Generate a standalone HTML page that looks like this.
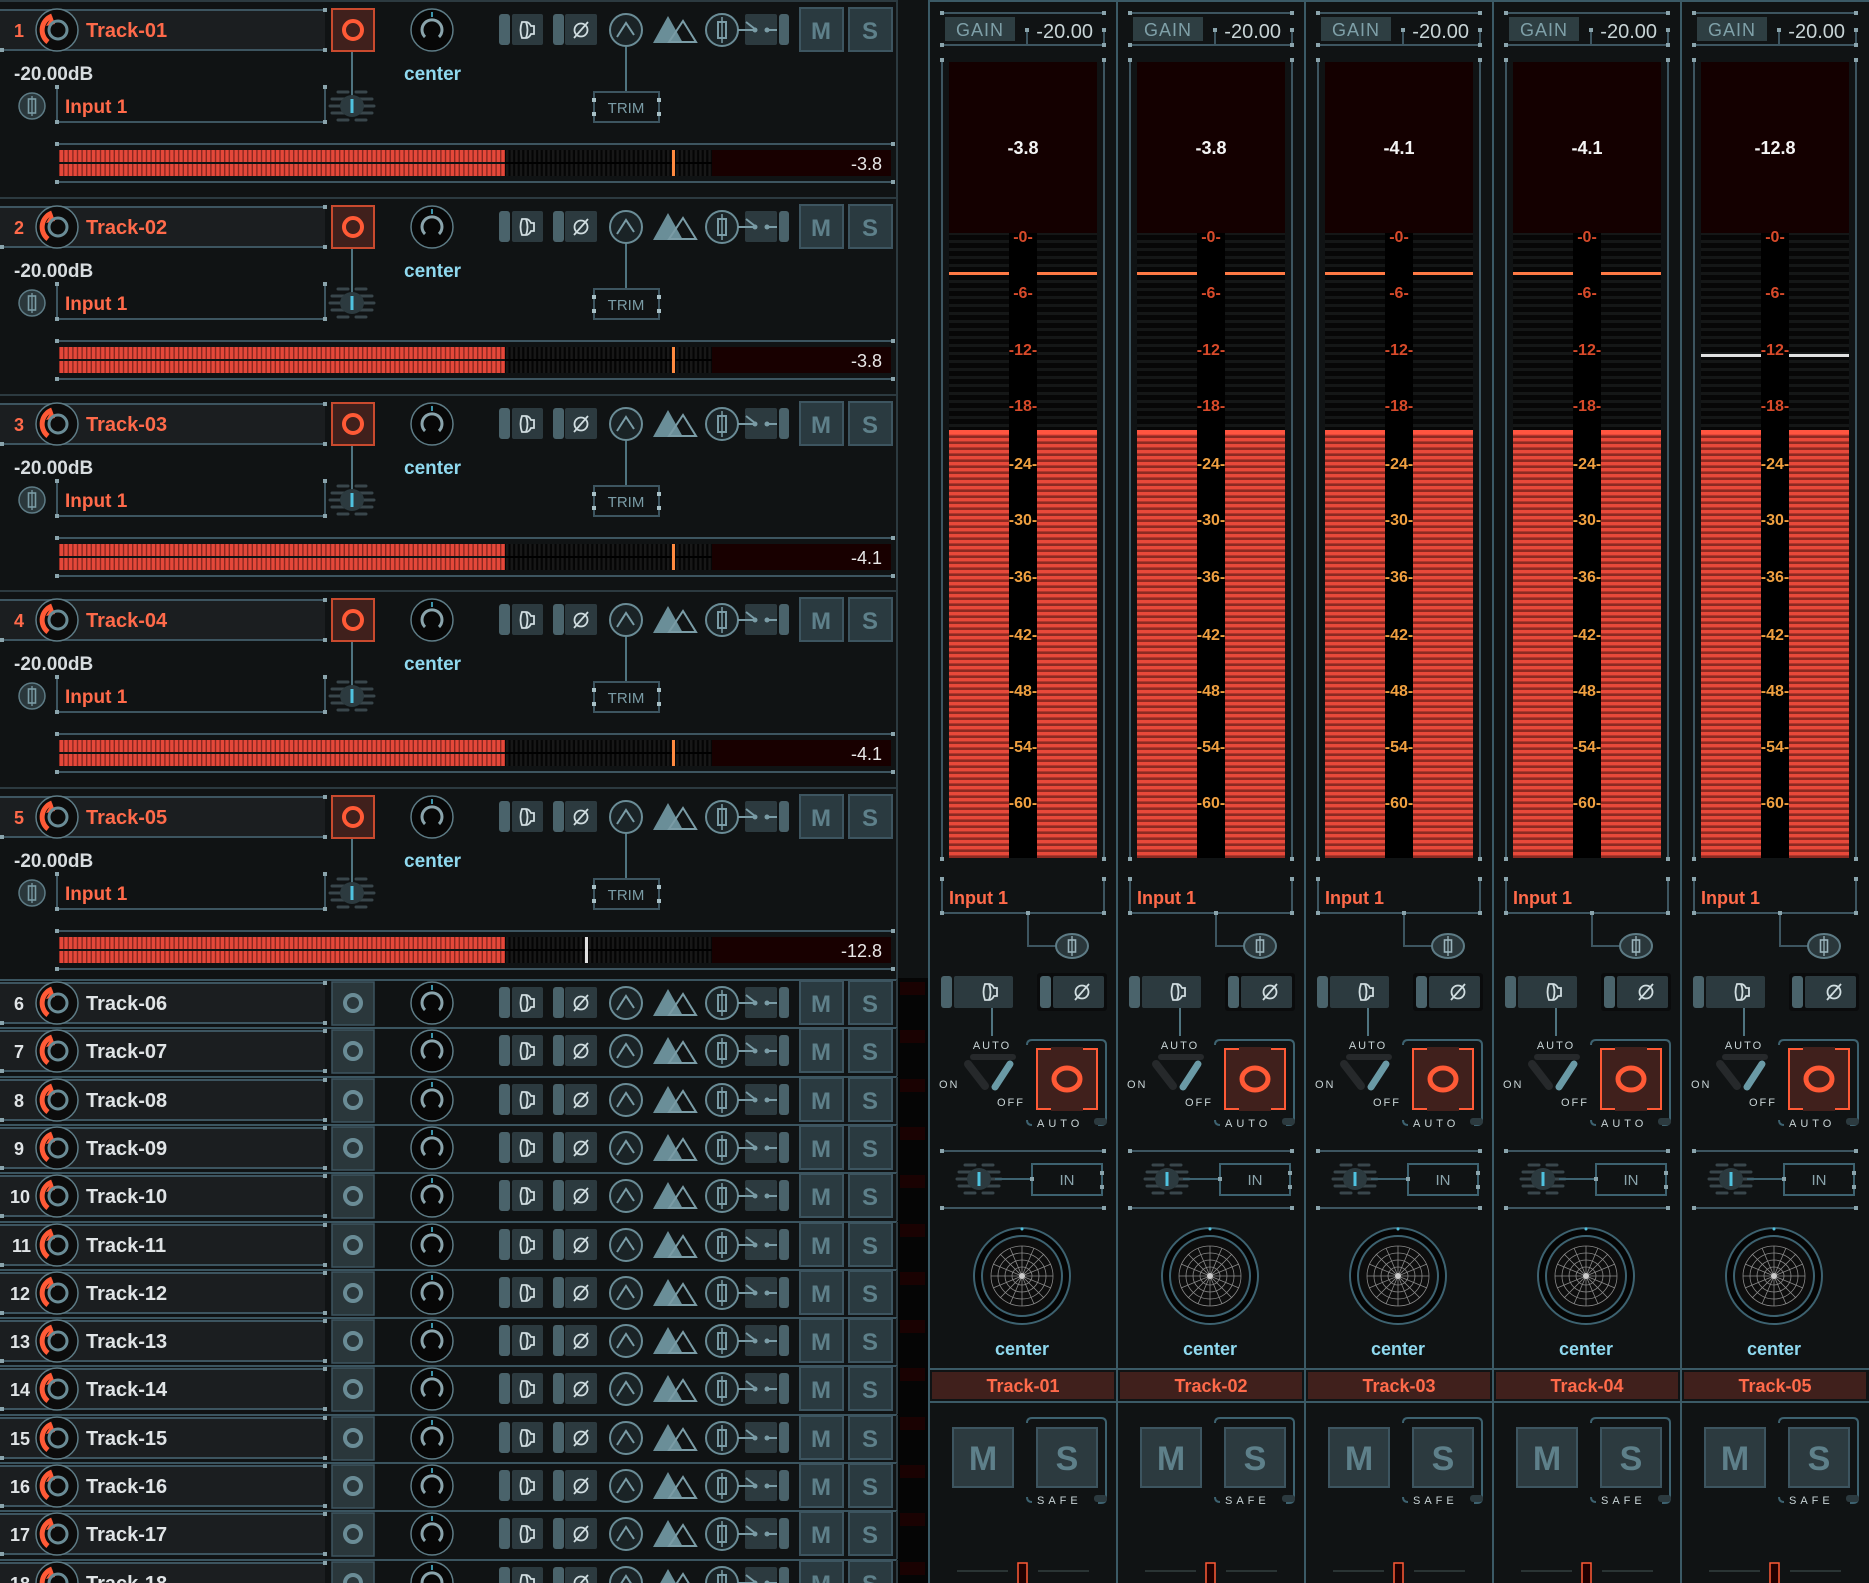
<!DOCTYPE html>
<html><head><meta charset="utf-8"><style>
html,body{margin:0;padding:0;background:#101314;}
svg{display:block;font-family:"Liberation Sans",sans-serif;}
.b{font-weight:bold}
</style></head><body>
<svg width="1869" height="1583" viewBox="0 0 1869 1583" xmlns="http://www.w3.org/2000/svg">
<defs>
<pattern id="rh" patternUnits="userSpaceOnUse" width="4.6" height="10"><rect width="4.6" height="10" fill="#8a2820"/><rect width="3.2" height="10" fill="#e5483a"/></pattern>
<pattern id="dh" patternUnits="userSpaceOnUse" width="4.6" height="10"><rect width="4.6" height="10" fill="#050505"/><rect width="2.4" height="10" fill="#181818"/></pattern>
<pattern id="rv" patternUnits="userSpaceOnUse" width="10" height="6"><rect width="10" height="6" fill="#8c2a22"/><rect width="10" height="3.4" fill="#e8493a"/></pattern>
<pattern id="dv" patternUnits="userSpaceOnUse" width="10" height="8"><rect width="10" height="8" fill="#070707"/><rect width="10" height="3" fill="#151717"/></pattern>

<symbol id="ic" overflow="visible">
  <circle cx="57" cy="0" r="21" fill="#0c0c0c" stroke="#5d7b85" stroke-width="1.5"/>
  <path d="M48,12 A15,15 0 0 1 52,-14" stroke="#ff5a36" stroke-width="5" fill="none"/>
  <path d="M46,-4 l6,-10 l3,8 z" fill="#ff5a36"/>
  <circle cx="58" cy="0" r="9" stroke="#6a8c96" stroke-width="3" fill="none"/>
  <circle cx="432" cy="0" r="21" fill="#070707" stroke="#5d7b85" stroke-width="1.5"/>
  <path d="M425,7 A10,10 0 1 1 439,7" stroke="#8aa4ac" stroke-width="3" fill="none"/>
  <line x1="432" y1="-18" x2="432" y2="-13" stroke="#4fc3e0" stroke-width="1.5"/>
  <rect x="499" y="-16" width="11" height="31" rx="3" fill="#4a636b"/>
  <rect x="512" y="-16" width="31" height="31" rx="2" fill="#2c3a3f"/>
  <path d="M522,-8 h4 q3,0 5,4 h3 v8 h-3 q-2,4 -5,4 h-4 q-3,-8 0,-16 z M526,-8 q3,8 0,16" stroke="#d0dde0" stroke-width="1.8" fill="none"/>
  <rect x="553" y="-16" width="11" height="31" rx="3" fill="#4a636b"/>
  <rect x="565" y="-16" width="32" height="31" rx="2" fill="#2c3a3f"/>
  <circle cx="581" cy="0" r="6.5" stroke="#d0dde0" stroke-width="1.8" fill="none"/>
  <line x1="574" y1="8" x2="588" y2="-8" stroke="#d0dde0" stroke-width="1.8"/>
  <circle cx="626" cy="0" r="16" stroke="#6a8c96" stroke-width="2" fill="#1a2326"/>
  <polyline points="617,7 626,-7 634,5" stroke="#7a9ca6" stroke-width="2" fill="none"/>
  <polygon points="653,13 668,-14 683,13" fill="#6a8e98"/>
  <polygon points="669,12 683,-9 696,12" stroke="#7a9ca6" stroke-width="2" fill="none"/>
  <circle cx="722" cy="0" r="16" stroke="#6a8c96" stroke-width="2" fill="#1a2326"/>
  <rect x="718" y="-8" width="8" height="16" stroke="#7a9ca6" stroke-width="2" fill="none"/>
  <line x1="722" y1="-13" x2="722" y2="13" stroke="#7a9ca6" stroke-width="1.5"/>
  <rect x="745" y="-16" width="32" height="31" rx="2" fill="#2c3a3f"/>
  <line x1="738" y1="0" x2="756" y2="0" stroke="#7a9ca6" stroke-width="2"/>
  <circle cx="755" cy="0" r="2.5" fill="#7a9ca6"/><circle cx="767" cy="0" r="2.5" fill="#7a9ca6"/>
  <line x1="755" y1="-1" x2="746" y2="-8" stroke="#7a9ca6" stroke-width="2"/>
  <line x1="767" y1="0" x2="777" y2="0" stroke="#7a9ca6" stroke-width="2"/>
  <rect x="779" y="-16" width="10" height="31" rx="3" fill="#4a636b"/>
  <rect x="800" y="-22" width="43" height="43" fill="#2a3a40" stroke="#3d5560" stroke-width="2"/>
  <rect x="849" y="-22" width="43" height="43" fill="#2a3a40" stroke="#3d5560" stroke-width="2"/>
</symbol>

<symbol id="fd" overflow="visible">
  <g stroke="#39464b" stroke-width="3" stroke-linecap="round">
  <line x1="-14" y1="-14" x2="-4" y2="-14"/><line x1="4" y1="-14" x2="14" y2="-14"/>
  <line x1="-20" y1="-7" x2="20" y2="-7"/><line x1="-22" y1="0" x2="22" y2="0"/><line x1="-20" y1="7" x2="20" y2="7"/>
  <line x1="-14" y1="14" x2="-4" y2="14"/><line x1="4" y1="14" x2="14" y2="14"/></g>
  <ellipse cx="0" cy="0" rx="12" ry="11" fill="#2c3a3f"/>
  <line x1="0" y1="-7" x2="0" y2="7" stroke="#4fc3e0" stroke-width="3"/>
</symbol>

<symbol id="bt" overflow="visible">
  <line x1="0" y1="1" x2="897" y2="1" stroke="#2c3a40" stroke-width="2"/>
  <rect x="0" y="10" width="325" height="40" fill="#1b1e20"/>
  <line x1="0" y1="10" x2="325" y2="10" stroke="#3d5560" stroke-width="2"/>
  <line x1="0" y1="50" x2="325" y2="50" stroke="#3d5560" stroke-width="2"/>
  <rect x="323" y="8" width="4" height="4" fill="#8aa4ac"/><rect x="323" y="48" width="4" height="4" fill="#8aa4ac"/>
  <rect x="0" y="48" width="4" height="4" fill="#8aa4ac"/>
  <line x1="352" y1="51" x2="352" y2="100" stroke="#4f7480" stroke-width="2"/>
  <rect x="332" y="9" width="42" height="42" fill="#40201c" stroke="#c94a2e" stroke-width="2"/>
  <circle cx="353" cy="30" r="9" stroke="#ff5a36" stroke-width="4" fill="none"/>
  <use href="#ic" y="30"/>
  <line x1="626" y1="47" x2="626" y2="92" stroke="#4f7480" stroke-width="2"/>
  <circle cx="32" cy="106" r="13" fill="#2a373b" stroke="#5d7b85" stroke-width="1.5"/>
  <rect x="28.5" y="99" width="7" height="14" stroke="#7a9ca6" stroke-width="1.6" fill="none"/>
  <line x1="32" y1="96" x2="32" y2="116" stroke="#7a9ca6" stroke-width="1.3"/>
  <polyline points="57,87 57,122 325,122 325,87" stroke="#3d5560" stroke-width="2" fill="none"/>
  <rect x="55" y="85" width="4" height="4" fill="#8aa4ac"/><rect x="323" y="85" width="4" height="4" fill="#8aa4ac"/>
  <rect x="55" y="120" width="4" height="4" fill="#8aa4ac"/><rect x="323" y="120" width="4" height="4" fill="#8aa4ac"/>
  <use href="#fd" x="352" y="106"/>
  <rect x="594" y="92" width="65" height="30" stroke="#3d5560" stroke-width="2" fill="none"/>
  <rect x="592" y="98" width="4" height="4" fill="#a8c0c6"/><rect x="657" y="98" width="4" height="4" fill="#a8c0c6"/>
  <rect x="592" y="112" width="4" height="4" fill="#a8c0c6"/><rect x="657" y="112" width="4" height="4" fill="#a8c0c6"/>
  <line x1="57" y1="144" x2="893" y2="144" stroke="#3d5560" stroke-width="2"/>
  <line x1="57" y1="182" x2="893" y2="182" stroke="#3d5560" stroke-width="2"/>
  <rect x="55" y="142" width="4" height="4" fill="#8aa4ac"/><rect x="891" y="142" width="4" height="4" fill="#8aa4ac"/>
  <rect x="55" y="180" width="4" height="4" fill="#8aa4ac"/><rect x="891" y="180" width="4" height="4" fill="#8aa4ac"/>
  <rect x="59" y="150" width="446" height="12" fill="url(#rh)"/>
  <rect x="59" y="164" width="446" height="12" fill="url(#rh)"/>
  <rect x="505" y="150" width="207" height="26" fill="url(#dh)"/>
  <rect x="505" y="162" width="207" height="2" fill="#000"/>
  <rect x="712" y="150" width="179" height="26" fill="#180000"/>
  <line x1="897" y1="0" x2="897" y2="197" stroke="#2c3a40" stroke-width="2"/>
</symbol>

<symbol id="sr" overflow="visible">
  <line x1="0" y1="0" x2="897" y2="0" stroke="#3b5560" stroke-width="2"/>
  <rect x="0" y="3" width="325" height="40" fill="#1b1e20"/>
  <line x1="0" y1="3" x2="325" y2="3" stroke="#3d5560" stroke-width="2"/>
  <line x1="0" y1="43" x2="325" y2="43" stroke="#3d5560" stroke-width="2"/>
  <rect x="323" y="1" width="4" height="4" fill="#8aa4ac"/><rect x="0" y="41" width="4" height="4" fill="#8aa4ac"/><rect x="323" y="41" width="4" height="4" fill="#8aa4ac"/>
  <rect x="332" y="2" width="42" height="43" fill="#2a373b" stroke="#3d5560" stroke-width="1.5"/>
  <circle cx="353" cy="23" r="8" stroke="#6a8c96" stroke-width="4" fill="none"/>
  <use href="#ic" y="23"/>
  <line x1="897" y1="0" x2="897" y2="48" stroke="#2c3a40" stroke-width="2"/>
  <rect x="900" y="2" width="25" height="13" fill="#1a0202"/>
</symbol>

<symbol id="st" overflow="visible">
  <line x1="0" y1="0" x2="0" y2="1583" stroke="#3b5a66" stroke-width="2"/>
  <line x1="0" y1="1" x2="188" y2="1" stroke="#3b5a66" stroke-width="2"/>
  <line x1="13" y1="13" x2="175" y2="13" stroke="#3d5560" stroke-width="2"/>
  <line x1="13" y1="45" x2="175" y2="45" stroke="#3d5560" stroke-width="2"/>
  <line x1="98" y1="30" x2="98" y2="45" stroke="#3d5560" stroke-width="2"/>
  <line x1="175" y1="30" x2="175" y2="45" stroke="#3d5560" stroke-width="2"/>
  <rect x="11" y="11" width="4" height="4" fill="#8aa4ac"/><rect x="173" y="11" width="4" height="4" fill="#8aa4ac"/>
  <rect x="11" y="43" width="4" height="4" fill="#8aa4ac"/><rect x="173" y="43" width="4" height="4" fill="#8aa4ac"/>
  <rect x="96" y="28" width="4" height="4" fill="#8aa4ac"/><rect x="173" y="28" width="4" height="4" fill="#8aa4ac"/>
  <rect x="16" y="17" width="70" height="24" fill="#2e3e42"/>
  <line x1="13" y1="60" x2="13" y2="858" stroke="#3d5560" stroke-width="2"/>
  <line x1="175" y1="60" x2="175" y2="858" stroke="#3d5560" stroke-width="2"/>
  <rect x="11" y="58" width="4" height="4" fill="#8aa4ac"/><rect x="173" y="58" width="4" height="4" fill="#8aa4ac"/>
  <rect x="11" y="857" width="4" height="4" fill="#8aa4ac"/><rect x="173" y="857" width="4" height="4" fill="#8aa4ac"/>
  <rect x="20" y="62" width="148" height="171" fill="#140000"/>
  <rect x="20" y="233" width="60" height="197" fill="url(#dv)"/>
  <rect x="108" y="233" width="60" height="197" fill="url(#dv)"/>
  <rect x="80" y="233" width="28" height="625" fill="#000"/>
  <rect x="20" y="430" width="60" height="428" fill="url(#rv)"/>
  <rect x="108" y="430" width="60" height="428" fill="url(#rv)"/>
  <rect x="20" y="430" width="60" height="4" fill="#ff5540"/><rect x="108" y="430" width="60" height="4" fill="#ff5540"/>
  <polyline points="13,879 13,913 175,913 175,879" stroke="#3d5560" stroke-width="2" fill="none"/>
  <rect x="11" y="877" width="4" height="4" fill="#8aa4ac"/><rect x="173" y="877" width="4" height="4" fill="#8aa4ac"/>
  <rect x="11" y="911" width="4" height="4" fill="#8aa4ac"/><rect x="173" y="911" width="4" height="4" fill="#8aa4ac"/>
  <polyline points="99,913 99,946 127,946" stroke="#3d5560" stroke-width="2" fill="none"/>
  <rect x="97" y="911" width="4" height="4" fill="#8aa4ac"/>
  <ellipse cx="143" cy="946" rx="16" ry="12" fill="#2a373b" stroke="#5d7b85" stroke-width="2"/>
  <rect x="139.5" y="940" width="7" height="12" stroke="#9ab4bc" stroke-width="1.6" fill="none"/>
  <line x1="143" y1="936" x2="143" y2="956" stroke="#9ab4bc" stroke-width="1.3"/>
  <rect x="12" y="976" width="11" height="32" rx="3" fill="#4a636b"/>
  <rect x="25" y="976" width="59" height="32" rx="2" fill="#2c3a3f"/>
  <path d="M56,984 h4 q3,0 5,4 h3 v8 h-3 q-2,4 -5,4 h-4 q-3,-8 0,-16 z M60,984 q3,8 0,16" stroke="#d0dde0" stroke-width="1.8" fill="none"/>
  <rect x="108" y="973" width="70" height="38" rx="3" fill="#0a0b0c"/>
  <rect x="111" y="976" width="11" height="32" rx="3" fill="#4a636b"/>
  <rect x="124" y="976" width="51" height="32" rx="2" fill="#2c3a3f"/>
  <circle cx="153" cy="992" r="6.5" stroke="#d0dde0" stroke-width="1.8" fill="none"/>
  <line x1="146" y1="1000" x2="160" y2="984" stroke="#d0dde0" stroke-width="1.8"/>
  <line x1="63" y1="1008" x2="63" y2="1036" stroke="#4f7480" stroke-width="2"/>
  <line x1="44" y1="1057" x2="84" y2="1057" stroke="#26292b" stroke-width="6" stroke-linecap="round"/>
  <line x1="39" y1="1064" x2="56" y2="1086" stroke="#26292b" stroke-width="8" stroke-linecap="round"/>
  <line x1="81" y1="1064" x2="66" y2="1087" stroke="#6a9aa6" stroke-width="7" stroke-linecap="round"/>
  <path d="M98,1045 q0,-5 5,-5 h69 q5,0 5,5 v75 q0,5 -5,5 h-3 M103,1125 q-5,0 -5,-5" stroke="#3d6270" stroke-width="2" fill="none"/>
  <rect x="108" y="1049" width="60" height="60" fill="#40201c" stroke="#ff5a36" stroke-width="2"/>
  <rect x="122" y="1047" width="32" height="4" fill="#40201c"/><rect x="122" y="1107" width="32" height="4" fill="#40201c"/>
  <ellipse cx="138" cy="1079" rx="13" ry="11" stroke="#ff5a36" stroke-width="5" fill="none"/>
  <rect x="165" y="1118" width="13" height="7" rx="3" fill="#2c3a3f"/>
  <line x1="13" y1="1151" x2="175" y2="1151" stroke="#3d5560" stroke-width="2"/>
  <line x1="13" y1="1208" x2="175" y2="1208" stroke="#3d5560" stroke-width="2"/>
  <rect x="11" y="1149" width="4" height="4" fill="#8aa4ac"/><rect x="173" y="1149" width="4" height="4" fill="#8aa4ac"/>
  <rect x="11" y="1206" width="4" height="4" fill="#8aa4ac"/><rect x="173" y="1206" width="4" height="4" fill="#8aa4ac"/>
  <use href="#fd" x="50" y="1179"/>
  <line x1="66" y1="1179" x2="104" y2="1179" stroke="#3d6270" stroke-width="2"/>
  <rect x="103" y="1164" width="70" height="31" stroke="#3d6270" stroke-width="2" fill="none"/>
  <rect x="171" y="1171" width="4" height="4" fill="#8aa4ac"/><rect x="171" y="1185" width="4" height="4" fill="#8aa4ac"/><rect x="101" y="1177" width="4" height="4" fill="#8aa4ac"/>
  <circle cx="93" cy="1276" r="48" stroke="#3d6270" stroke-width="2" fill="#050505"/>
  <circle cx="93" cy="1276" r="40" stroke="#3d6270" stroke-width="2" fill="#0d0d0d"/>
  <g stroke="#8a8a8a" stroke-width="0.8" fill="none">
  <ellipse cx="93" cy="1276" rx="31" ry="30"/><ellipse cx="93" cy="1276" rx="24" ry="23"/><ellipse cx="93" cy="1276" rx="17" ry="16"/><ellipse cx="93" cy="1276" rx="10" ry="9"/>
  <path d="M62,1276 H124 M93,1246 V1306 M71,1254 L115,1298 M115,1254 L71,1298 M81,1248 L105,1304 M105,1248 L81,1304 M64,1264 L122,1288 M122,1264 L64,1288"/>
  </g>
  <circle cx="93" cy="1276" r="3" fill="#ccc"/>
  <circle cx="93" cy="1229" r="1.5" fill="#4fc3e0"/>
  <line x1="0" y1="1369" x2="188" y2="1369" stroke="#3b5a66" stroke-width="2"/>
  <line x1="0" y1="1402" x2="188" y2="1402" stroke="#3b5a66" stroke-width="2"/>
  <rect x="3" y="1372" width="182" height="27" fill="#40201c"/>
  <rect x="24" y="1428" width="60" height="59" fill="#2c3a3f" stroke="#3d5560" stroke-width="2"/>
  <path d="M98,1423 q0,-5 5,-5 h69 q5,0 5,5 v75 q0,5 -5,5 h-3 M103,1502 q-5,0 -5,-5" stroke="#3d6270" stroke-width="2" fill="none"/>
  <rect x="108" y="1428" width="60" height="59" fill="#2c3a3f" stroke="#3d5560" stroke-width="2"/>
  <rect x="165" y="1495" width="13" height="7" rx="3" fill="#2c3a3f"/>
  <line x1="28" y1="1571" x2="79" y2="1571" stroke="#33403f" stroke-width="1.5"/>
  <line x1="109" y1="1571" x2="160" y2="1571" stroke="#33403f" stroke-width="1.5"/>
  <rect x="89" y="1563" width="9" height="22" fill="#200000" stroke="#ff5a36" stroke-width="1.5"/>
</symbol>
</defs>

<rect width="1869" height="1583" fill="#101314"/>
<rect x="898" y="978" width="31" height="605" fill="#050505"/>

<use href="#bt" y="0"/>
<use href="#bt" y="197"/>
<use href="#bt" y="394"/>
<use href="#bt" y="590"/>
<use href="#bt" y="787"/>
<g fill="#ff8a40">
<rect x="672" y="150" width="3" height="26"/><rect x="672" y="347" width="3" height="26"/><rect x="672" y="544" width="3" height="26"/><rect x="672" y="740" width="3" height="26"/>
</g>
<rect x="585" y="937" width="3" height="26" fill="#e0e0e0"/>

<g class="b" font-size="18" fill="#ff6a4a">
<text x="14" y="37">1</text><text x="14" y="234">2</text><text x="14" y="431">3</text><text x="14" y="627">4</text><text x="14" y="824">5</text>
</g>
<g class="b" font-size="20" fill="#ff6a4a">
<text x="86" y="37">Track-01</text><text x="86" y="234">Track-02</text><text x="86" y="431">Track-03</text><text x="86" y="627">Track-04</text><text x="86" y="824">Track-05</text>
<text x="65" y="113" font-size="19">Input 1</text><text x="65" y="310" font-size="19">Input 1</text><text x="65" y="507" font-size="19">Input 1</text><text x="65" y="703" font-size="19">Input 1</text><text x="65" y="900" font-size="19">Input 1</text>
</g>
<g class="b" font-size="19" fill="#d8dde0">
<text x="14" y="80">-20.00dB</text><text x="14" y="277">-20.00dB</text><text x="14" y="474">-20.00dB</text><text x="14" y="670">-20.00dB</text><text x="14" y="867">-20.00dB</text>
</g>
<g class="b" font-size="19" fill="#8fd9ef">
<text x="404" y="80">center</text><text x="404" y="277">center</text><text x="404" y="474">center</text><text x="404" y="670">center</text><text x="404" y="867">center</text>
</g>
<g font-size="15" fill="#7a9ca6" text-anchor="middle">
<text x="626" y="113">TRIM</text><text x="626" y="310">TRIM</text><text x="626" y="507">TRIM</text><text x="626" y="703">TRIM</text><text x="626" y="900">TRIM</text>
</g>
<g font-size="18" fill="#e8e8e8" text-anchor="end">
<text x="882" y="170">-3.8</text><text x="882" y="367">-3.8</text><text x="882" y="564">-4.1</text><text x="882" y="760">-4.1</text><text x="882" y="957">-12.8</text>
</g>

<use href="#sr" y="980"/><use href="#sr" y="1028"/><use href="#sr" y="1077"/><use href="#sr" y="1125"/><use href="#sr" y="1173"/><use href="#sr" y="1222"/><use href="#sr" y="1270"/><use href="#sr" y="1318"/><use href="#sr" y="1366"/><use href="#sr" y="1415"/><use href="#sr" y="1463"/><use href="#sr" y="1511"/><use href="#sr" y="1560"/>
<g class="b" font-size="18" fill="#e0e4e6">
<text x="14" y="1010">6</text><text x="86" y="1010" font-size="20">Track-06</text>
<text x="14" y="1058">7</text><text x="86" y="1058" font-size="20">Track-07</text>
<text x="14" y="1107">8</text><text x="86" y="1107" font-size="20">Track-08</text>
<text x="14" y="1155">9</text><text x="86" y="1155" font-size="20">Track-09</text>
<text x="10" y="1203">10</text><text x="86" y="1203" font-size="20">Track-10</text>
<text x="12" y="1252">11</text><text x="86" y="1252" font-size="20">Track-11</text>
<text x="10" y="1300">12</text><text x="86" y="1300" font-size="20">Track-12</text>
<text x="10" y="1348">13</text><text x="86" y="1348" font-size="20">Track-13</text>
<text x="10" y="1396">14</text><text x="86" y="1396" font-size="20">Track-14</text>
<text x="10" y="1445">15</text><text x="86" y="1445" font-size="20">Track-15</text>
<text x="10" y="1493">16</text><text x="86" y="1493" font-size="20">Track-16</text>
<text x="10" y="1541">17</text><text x="86" y="1541" font-size="20">Track-17</text>
<text x="10" y="1590">18</text><text x="86" y="1590" font-size="20">Track-18</text>
</g>
<g class="b" font-size="24" fill="#5e808a" text-anchor="middle">
<text x="821" y="39">M</text><text x="870" y="39">S</text>
<text x="821" y="236">M</text><text x="870" y="236">S</text>
<text x="821" y="433">M</text><text x="870" y="433">S</text>
<text x="821" y="629">M</text><text x="870" y="629">S</text>
<text x="821" y="826">M</text><text x="870" y="826">S</text>
<text x="821" y="1012">M</text><text x="870" y="1012">S</text>
<text x="821" y="1060">M</text><text x="870" y="1060">S</text>
<text x="821" y="1109">M</text><text x="870" y="1109">S</text>
<text x="821" y="1157">M</text><text x="870" y="1157">S</text>
<text x="821" y="1205">M</text><text x="870" y="1205">S</text>
<text x="821" y="1254">M</text><text x="870" y="1254">S</text>
<text x="821" y="1302">M</text><text x="870" y="1302">S</text>
<text x="821" y="1350">M</text><text x="870" y="1350">S</text>
<text x="821" y="1398">M</text><text x="870" y="1398">S</text>
<text x="821" y="1447">M</text><text x="870" y="1447">S</text>
<text x="821" y="1495">M</text><text x="870" y="1495">S</text>
<text x="821" y="1543">M</text><text x="870" y="1543">S</text>
<text x="821" y="1592">M</text><text x="870" y="1592">S</text>
</g>

<use href="#st" x="929"/><use href="#st" x="1117"/><use href="#st" x="1305"/><use href="#st" x="1493"/><use href="#st" x="1681"/>
<g fill="#ff7a45">
<rect x="949" y="272" width="60" height="3"/><rect x="1037" y="272" width="60" height="3"/>
<rect x="1137" y="272" width="60" height="3"/><rect x="1225" y="272" width="60" height="3"/>
<rect x="1325" y="272" width="60" height="3"/><rect x="1413" y="272" width="60" height="3"/>
<rect x="1513" y="272" width="60" height="3"/><rect x="1601" y="272" width="60" height="3"/>
</g>
<g fill="#e0e0e0"><rect x="1701" y="354" width="60" height="3"/><rect x="1789" y="354" width="60" height="3"/></g>

<g font-size="18" fill="#7fa0a8" text-anchor="middle" letter-spacing="1">
<text x="980" y="36">GAIN</text><text x="1168" y="36">GAIN</text><text x="1356" y="36">GAIN</text><text x="1544" y="36">GAIN</text><text x="1732" y="36">GAIN</text>
</g>
<g font-size="20" fill="#c8d4d6" text-anchor="end">
<text x="1093" y="38">-20.00</text><text x="1281" y="38">-20.00</text><text x="1469" y="38">-20.00</text><text x="1657" y="38">-20.00</text><text x="1845" y="38">-20.00</text>
</g>
<g class="b" font-size="18" fill="#f4f4f4" text-anchor="middle">
<text x="1023" y="154">-3.8</text><text x="1211" y="154">-3.8</text><text x="1399" y="154">-4.1</text><text x="1587" y="154">-4.1</text><text x="1775" y="154">-12.8</text>
</g>
<g class="b" font-size="16" text-anchor="middle">
<g fill="#d84a2a">
<text x="1023" y="242">-0-</text><text x="1023" y="298">-6-</text><text x="1023" y="355">-12-</text><text x="1023" y="411">-18-</text>
<text x="1211" y="242">-0-</text><text x="1211" y="298">-6-</text><text x="1211" y="355">-12-</text><text x="1211" y="411">-18-</text>
<text x="1399" y="242">-0-</text><text x="1399" y="298">-6-</text><text x="1399" y="355">-12-</text><text x="1399" y="411">-18-</text>
<text x="1587" y="242">-0-</text><text x="1587" y="298">-6-</text><text x="1587" y="355">-12-</text><text x="1587" y="411">-18-</text>
<text x="1775" y="242">-0-</text><text x="1775" y="298">-6-</text><text x="1775" y="355">-12-</text><text x="1775" y="411">-18-</text>
</g>
<g fill="#f0a040">
<text x="1023" y="469">-24-</text><text x="1023" y="525">-30-</text><text x="1023" y="582">-36-</text><text x="1023" y="640">-42-</text><text x="1023" y="696">-48-</text><text x="1023" y="752">-54-</text><text x="1023" y="808">-60-</text>
<text x="1211" y="469">-24-</text><text x="1211" y="525">-30-</text><text x="1211" y="582">-36-</text><text x="1211" y="640">-42-</text><text x="1211" y="696">-48-</text><text x="1211" y="752">-54-</text><text x="1211" y="808">-60-</text>
<text x="1399" y="469">-24-</text><text x="1399" y="525">-30-</text><text x="1399" y="582">-36-</text><text x="1399" y="640">-42-</text><text x="1399" y="696">-48-</text><text x="1399" y="752">-54-</text><text x="1399" y="808">-60-</text>
<text x="1587" y="469">-24-</text><text x="1587" y="525">-30-</text><text x="1587" y="582">-36-</text><text x="1587" y="640">-42-</text><text x="1587" y="696">-48-</text><text x="1587" y="752">-54-</text><text x="1587" y="808">-60-</text>
<text x="1775" y="469">-24-</text><text x="1775" y="525">-30-</text><text x="1775" y="582">-36-</text><text x="1775" y="640">-42-</text><text x="1775" y="696">-48-</text><text x="1775" y="752">-54-</text><text x="1775" y="808">-60-</text>
</g>
</g>
<g class="b" font-size="18" fill="#ff6a4a">
<text x="949" y="904">Input 1</text><text x="1137" y="904">Input 1</text><text x="1325" y="904">Input 1</text><text x="1513" y="904">Input 1</text><text x="1701" y="904">Input 1</text>
</g>
<g font-size="11" fill="#c8d4d6" letter-spacing="2">
<text x="992" y="1049" text-anchor="middle">AUTO</text><text x="1180" y="1049" text-anchor="middle">AUTO</text><text x="1368" y="1049" text-anchor="middle">AUTO</text><text x="1556" y="1049" text-anchor="middle">AUTO</text><text x="1744" y="1049" text-anchor="middle">AUTO</text>
<text x="939" y="1088">ON</text><text x="1127" y="1088">ON</text><text x="1315" y="1088">ON</text><text x="1503" y="1088">ON</text><text x="1691" y="1088">ON</text>
<text x="997" y="1106">OFF</text><text x="1185" y="1106">OFF</text><text x="1373" y="1106">OFF</text><text x="1561" y="1106">OFF</text><text x="1749" y="1106">OFF</text>
</g>
<g font-size="11" fill="#c8d4d6" letter-spacing="4">
<text x="1037" y="1127">AUTO</text><text x="1225" y="1127">AUTO</text><text x="1413" y="1127">AUTO</text><text x="1601" y="1127">AUTO</text><text x="1789" y="1127">AUTO</text>
<text x="1037" y="1504">SAFE</text><text x="1225" y="1504">SAFE</text><text x="1413" y="1504">SAFE</text><text x="1601" y="1504">SAFE</text><text x="1789" y="1504">SAFE</text>
</g>
<g font-size="15" fill="#8aa4ac" text-anchor="middle">
<text x="1067" y="1185">IN</text><text x="1255" y="1185">IN</text><text x="1443" y="1185">IN</text><text x="1631" y="1185">IN</text><text x="1819" y="1185">IN</text>
</g>
<g class="b" font-size="18" fill="#8fd9ef" text-anchor="middle">
<text x="1022" y="1355">center</text><text x="1210" y="1355">center</text><text x="1398" y="1355">center</text><text x="1586" y="1355">center</text><text x="1774" y="1355">center</text>
</g>
<g class="b" font-size="18" fill="#ff6a4a" text-anchor="middle">
<text x="1023" y="1392">Track-01</text><text x="1211" y="1392">Track-02</text><text x="1399" y="1392">Track-03</text><text x="1587" y="1392">Track-04</text><text x="1775" y="1392">Track-05</text>
</g>
<g class="b" font-size="34" fill="#5e808a" text-anchor="middle">
<text x="983" y="1470">M</text><text x="1067" y="1470">S</text>
<text x="1171" y="1470">M</text><text x="1255" y="1470">S</text>
<text x="1359" y="1470">M</text><text x="1443" y="1470">S</text>
<text x="1547" y="1470">M</text><text x="1631" y="1470">S</text>
<text x="1735" y="1470">M</text><text x="1819" y="1470">S</text>
</g>
</svg>
</body></html>
